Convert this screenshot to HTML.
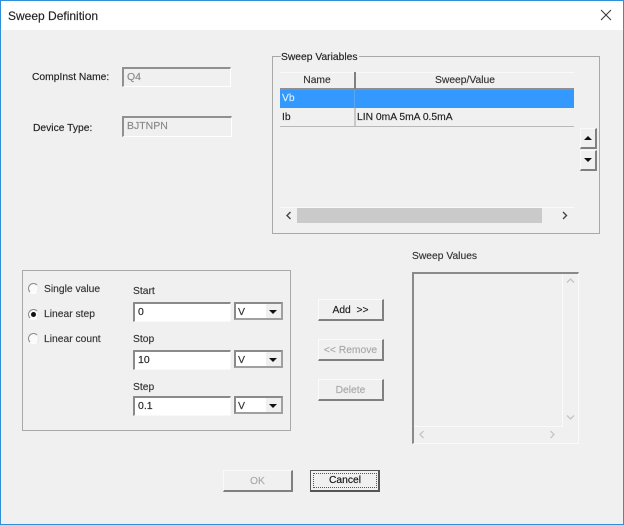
<!DOCTYPE html>
<html><head><meta charset="utf-8">
<style>
html,body{margin:0;padding:0;background:#f0f0f0}
#w{position:relative;width:624px;height:525px;overflow:hidden;background:#f0f0f0;font:10.3px/14px "Liberation Sans",sans-serif;color:#222;filter:blur(0.35px);-webkit-text-stroke:0.15px currentColor}
#w div{position:absolute;box-sizing:border-box}
.t{white-space:nowrap}
.edit{background:#fff;border-top:2px solid #8a8a8a;border-left:2px solid #8a8a8a;border-right:1px solid #f8f8f8;border-bottom:1px solid #f8f8f8;padding:1px 0 0 3px;font-size:10.5px}
.dis{background:#f0f0f0;color:#888;border-top:2px solid #909090;border-left:2px solid #909090;border-right:1px solid #fff;border-bottom:1px solid #fff}
.btn{background:#f0f0f0;border-top:1px solid #fafafa;border-left:1px solid #fafafa;border-right:2px solid #808080;border-bottom:2px solid #808080;text-align:center;line-height:21px}
.off{color:#a8a8a8}
.combo{background:#fff;border:2px solid #8a8a8a;border-right:2px solid #a0a0a0;border-bottom:2px solid #a0a0a0;padding:1px 0 0 2px;color:#333;font-size:10.5px}
.cb{background:#f0f0f0;right:0;top:0;width:15px;height:14px}
.tri-d{width:0;height:0;border-left:4px solid transparent;border-right:4px solid transparent;border-top:4px solid #111}
.tri-u{width:0;height:0;border-left:4px solid transparent;border-right:4px solid transparent;border-bottom:4px solid #111}
.radio{width:11px;height:11px;border-radius:50%;background:#fafafa;border:1.5px solid;border-color:#8c8c8c #e8e8e8 #fff #8c8c8c}
</style></head><body>
<div id="w">
<div style="left:0;top:0;width:624px;height:30px;background:#fff"></div>
<div style="left:0;top:0;width:624px;height:1px;background:#2f8fd8"></div>
<div style="left:0;top:0;width:1px;height:525px;background:#2f8fd8"></div>
<div style="left:623px;top:0;width:1px;height:525px;background:#2f8fd8"></div>
<div style="left:0;top:524px;width:624px;height:1px;background:#2f8fd8"></div>
<div class="t" style="left:8px;top:8px;font-size:12px;line-height:16px;color:#222">Sweep Definition</div>
<svg style="position:absolute;left:600px;top:9px" width="12" height="12" viewBox="0 0 12 12"><path d="M1 1L11 11M11 1L1 11" stroke="#333" stroke-width="1" fill="none"/></svg>

<div class="t" style="left:32px;top:71px">CompInst Name:</div>
<div class="edit dis" style="left:122px;top:67px;width:109px;height:20px">Q4</div>
<div class="t" style="left:33px;top:122px">Device Type:</div>
<div class="edit dis" style="left:122px;top:116px;width:110px;height:21px">BJTNPN</div>

<!-- Sweep variables -->
<div style="left:272px;top:56px;width:328px;height:178px;border:1px solid #a8a8a8"></div>
<div class="t" style="left:281px;top:51px;background:#f0f0f0;padding-right:1px">Sweep Variables</div>
<div style="left:280px;top:72px;width:294px;height:1px;background:#fafafa"></div>
<div style="left:280px;top:88px;width:294px;height:2px;background:#8f8f8f"></div>
<div style="left:354px;top:72px;width:2px;height:17px;background:#808080"></div>
<div class="t" style="left:280px;top:74px;width:74px;text-align:center;color:#333">Name</div>
<div class="t" style="left:356px;top:74px;width:218px;text-align:center;color:#333">Sweep/Value</div>
<div style="left:280px;top:90px;width:294px;height:18px;background:#3399ff"></div>
<div class="t" style="left:282px;top:92px;color:#dceeff">Vb</div>
<div style="left:354px;top:90px;width:1px;height:18px;background:#5ba8f0"></div>
<div class="t" style="left:282px;top:111px">Ib</div>
<div class="t" style="left:357px;top:111px">LIN 0mA 5mA 0.5mA</div>
<div style="left:354px;top:108px;width:2px;height:18px;background:#c8c8c8"></div>
<div style="left:280px;top:126px;width:294px;height:1px;background:#b8b8b8"></div>
<div style="left:280px;top:207px;width:294px;height:16px;background:#f0f0f0;border-top:1px solid #fafafa"></div>
<div style="left:297px;top:208px;width:245px;height:15px;background:#cacaca"></div>
<svg style="position:absolute;left:285px;top:211px" width="8" height="9" viewBox="0 0 8 9"><path d="M5.5 1L2 4.5L5.5 8" stroke="#444" stroke-width="1.4" fill="none"/></svg>
<svg style="position:absolute;left:561px;top:211px" width="8" height="9" viewBox="0 0 8 9"><path d="M2 1L5.5 4.5L2 8" stroke="#444" stroke-width="1.4" fill="none"/></svg>
<div class="btn" style="left:580px;top:128px;width:17px;height:21px"><div class="tri-u" style="left:3px;top:7px"></div></div>
<div class="btn" style="left:580px;top:150px;width:17px;height:21px"><div class="tri-d" style="left:3px;top:7px"></div></div>

<!-- Left group -->
<div style="left:22px;top:270px;width:269px;height:161px;border:1px solid #a8a8a8"></div>
<div class="radio" style="left:28px;top:283px"></div>
<div class="radio" style="left:28px;top:309px"></div>
<div style="left:31px;top:312px;width:5px;height:5px;border-radius:50%;background:#111"></div>
<div class="radio" style="left:28px;top:333px"></div>
<div class="t" style="left:44px;top:283px;color:#333">Single value</div>
<div class="t" style="left:44px;top:308px;color:#333">Linear step</div>
<div class="t" style="left:44px;top:333px;color:#333">Linear count</div>

<div class="t" style="left:133px;top:285px;color:#333">Start</div>
<div class="edit" style="left:133px;top:302px;width:98px;height:20px">0</div>
<div class="combo" style="left:234px;top:302px;width:49px;height:18px">V<div class="cb"><div class="tri-d" style="left:3px;top:6px"></div></div></div>
<div class="t" style="left:133px;top:333px;color:#333">Stop</div>
<div class="edit" style="left:133px;top:350px;width:98px;height:20px">10</div>
<div class="combo" style="left:234px;top:350px;width:49px;height:18px">V<div class="cb"><div class="tri-d" style="left:3px;top:6px"></div></div></div>
<div class="t" style="left:133px;top:381px;color:#333">Step</div>
<div class="edit" style="left:133px;top:396px;width:98px;height:20px">0.1</div>
<div class="combo" style="left:234px;top:396px;width:49px;height:18px">V<div class="cb"><div class="tri-d" style="left:3px;top:6px"></div></div></div>

<!-- Middle buttons -->
<div class="btn" style="left:318px;top:299px;width:66px;height:22px;color:#222;white-space:pre">Add  &gt;&gt;</div>
<div class="btn off" style="left:318px;top:339px;width:66px;height:22px">&lt;&lt; Remove</div>
<div class="btn off" style="left:318px;top:379px;width:66px;height:22px">Delete</div>

<!-- Sweep values -->
<div class="t" style="left:412px;top:250px;color:#333">Sweep Values</div>
<div style="left:412px;top:272px;width:167px;height:172px;border-top:2px solid #8a8a8a;border-left:2px solid #8a8a8a;border-right:1px solid #fafafa;border-bottom:1px solid #fafafa"></div>
<div style="left:562px;top:274px;width:1px;height:153px;background:#fafafa"></div>
<div style="left:414px;top:426px;width:149px;height:1px;background:#fafafa"></div>
<svg style="position:absolute;left:566px;top:277px" width="9" height="7" viewBox="0 0 9 7"><path d="M1 5.5L4.5 2L8 5.5" stroke="#c4c4c4" stroke-width="1.3" fill="none"/></svg>
<svg style="position:absolute;left:566px;top:414px" width="9" height="7" viewBox="0 0 9 7"><path d="M1 1.5L4.5 5L8 1.5" stroke="#c4c4c4" stroke-width="1.3" fill="none"/></svg>
<svg style="position:absolute;left:418px;top:430px" width="7" height="9" viewBox="0 0 7 9"><path d="M5.5 1L2 4.500L5.500 8" stroke="#c4c4c4" stroke-width="1.3" fill="none"/></svg>
<svg style="position:absolute;left:549px;top:430px" width="7" height="9" viewBox="0 0 7 9"><path d="M1.500 1L5 4.500L1.500 8" stroke="#c4c4c4" stroke-width="1.3" fill="none"/></svg>

<!-- Bottom buttons -->
<div class="btn off" style="left:223px;top:470px;width:70px;height:22px">OK</div>
<div class="btn" style="left:310px;top:470px;width:70px;height:22px;padding-left:1px;border:1px solid #555;border-right:2px solid #555;border-bottom:2px solid #555;color:#111;line-height:20px"><div style="left:2px;top:2px;width:64px;height:15px;border:1px dotted #555"></div>Cancel</div>
</div>
</body></html>
